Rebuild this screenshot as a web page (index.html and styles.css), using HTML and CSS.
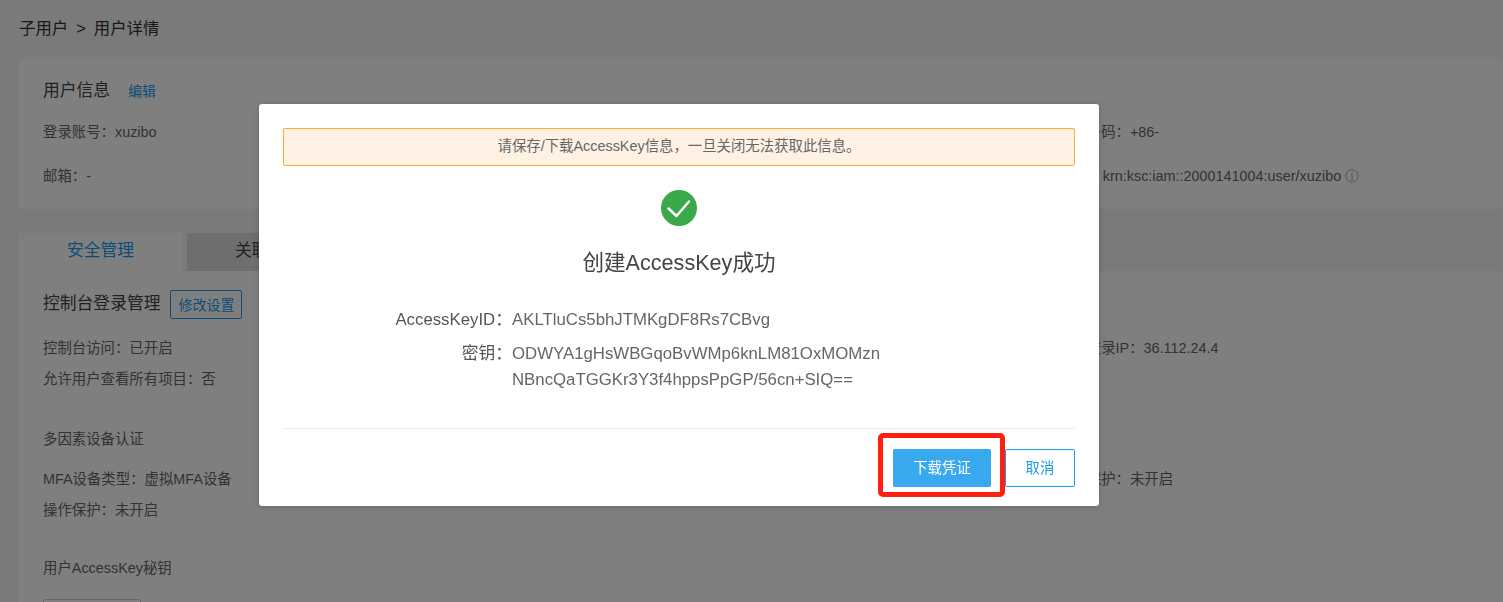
FILE: index.html
```html
<!DOCTYPE html>
<html lang="zh-CN">
<head>
<meta charset="utf-8">
<title>用户详情</title>
<link rel="stylesheet" href="styles.css">
</head>
<body>
<main class="page">
  <div class="crumb">子用户<span class="crumb-sep">&gt;</span>用户详情</div>

  <section class="card info-card">
    <div class="head"><h2 class="head-title">用户信息</h2><a class="link">编辑</a></div>
    <div class="grid info-grid">
      <div>登录账号：xuzibo</div><div>手机号码：+86-</div>
      <div>邮箱：-</div>
      <div class="arn">ARN：krn:ksc:iam::2000141004:user/xuzibo
        <svg class="info-icon" viewBox="0 0 14 14"><circle cx="7" cy="7" r="6.2"/><path d="M7 3.2v1.6M5.8 6h1.4v4.4M5.6 10.6h3"/></svg>
      </div>
    </div>
  </section>

  <nav class="tabs">
    <div class="tab active">安全管理</div>
    <div class="tab">关联项目</div>
  </nav>

  <section class="card panel">
    <div class="head panel-head"><h2 class="head-title">控制台登录管理</h2><button class="outline">修改设置</button></div>
    <div class="grid access-grid">
      <div>控制台访问：已开启</div><div>最近登录IP：36.112.24.4</div>
      <div>允许用户查看所有项目：否</div>
    </div>
    <h3 class="sub mfa-title">多因素设备认证</h3>
    <div class="grid mfa-grid">
      <div>MFA设备类型：虚拟MFA设备</div><div>登录保护：未开启</div>
      <div>操作保护：未开启</div>
    </div>
    <h3 class="sub key-title">用户AccessKey秘钥</h3>
    <button class="create" aria-label="新建"></button>
  </section>
</main>

<div class="overlay">
  <div class="modal">
    <div class="alert">请保存/下载AccessKey信息，一旦关闭无法获取此信息。</div>
    <svg class="ok" viewBox="0 0 36 36"><circle cx="18" cy="18" r="18"/><path d="M7.5 18.5l8 7.5L28 11.5"/></svg>
    <h2 class="modal-title">创建AccessKey成功</h2>
    <dl class="creds">
      <dt>AccessKeyID：</dt><dd>AKLTluCs5bhJTMKgDF8Rs7CBvg</dd>
      <dt>密钥：</dt><dd>ODWYA1gHsWBGqoBvWMp6knLM81OxMOMzn<br>NBncQaTGGKr3Y3f4hppsPpGP/56cn+SIQ==</dd>
    </dl>
    <div class="modal-foot">
      <button class="primary">下载凭证<span class="mark"></span></button>
      <button class="cancel">取消</button>
    </div>
  </div>
</div>
</body>
</html>
```
FILE: styles.css
```css
* { box-sizing: border-box; }
html, body { margin: 0; height: 100%; overflow: hidden; }
body {
  background: #f5f5f5;
  color: #666;
  font: 14.4px/20px "Liberation Sans", "Noto Sans CJK SC", sans-serif;
}
h2, h3, dl, dd { margin: 0; font-weight: 400; }
button { font: inherit; cursor: pointer; border-radius: 2px; }

.page { padding: 18px 0 0 19px; }
.crumb { color: #333; font-size: 16.4px; line-height: 20px; }
.crumb-sep { margin: 0 8px; }

.card { background: #fff; border-radius: 4px; padding-left: 24px; }
.info-card { margin-top: 21px; height: 150px; padding-top: 22px; }
.head { display: flex; align-items: center; }
.head-title { color: #444; font-size: 16.8px; line-height: 20px; }
.link { margin-left: 18px; color: #1a9bec; font-size: 13.9px; }

.grid { display: grid; grid-template-columns: 1015px 1fr; }
.info-grid { margin-top: 21px; row-gap: 24px; }
.arn { display: flex; align-items: center; gap: 4px; white-space: nowrap; }
.info-icon { width: 14px; height: 14px; fill: none; stroke: #aaa; stroke-width: 1; }

.tabs { display: flex; gap: 5px; margin-top: 24px; height: 38px; }
.tab { width: 163px; background: #ddd; color: #444; font-size: 16.8px; line-height: 36px; text-align: center; }
.tab.active { background: #fff; color: #1a9bec; }
.tab + .tab { width: 400px; text-align: left; padding-left: 48px; }

.panel { padding-top: 19px; height: 400px; border-radius: 0 4px 0 0; }
.panel-head { gap: 10px; height: 29px; }
.panel-head .head-title { margin-top: -2px; }
.outline { width: 72px; height: 29px; padding: 0; background: none; border: 1px solid #1a9bec; color: #1a9bec; font-size: 14px; }
.access-grid { margin-top: 19px; row-gap: 11px; }
.sub { color: #666; font-size: 14.4px; line-height: 20px; }
.mfa-title { margin-top: 40px; }
.mfa-grid { margin-top: 20px; row-gap: 11px; }
.key-title { margin-top: 38px; }
.create { display: block; width: 98px; height: 38px; margin-top: 21px; background: #fff; border: 1px solid #ccc; }

.overlay { position: fixed; inset: 0; background: rgba(0, 0, 0, .5); overflow: hidden; }
.modal {
  width: 840px; height: 402px; margin: 104px 0 0 259px; padding: 24px 24px 19px;
  background: #fff; border-radius: 3px; box-shadow: 0 1px 6px rgba(0, 0, 0, .2);
  display: flex; flex-direction: column; align-items: stretch;
}
.alert {
  height: 38px; background: #fff2e5; border: 1px solid #ffaa33; border-radius: 2px;
  color: #666; font-size: 14.4px; line-height: 34px; text-align: center;
}
.ok { align-self: center; width: 36px; height: 36px; margin-top: 24px; flex: none; }
.ok circle { fill: #3ba849; }
.ok path { fill: none; stroke: #fff; stroke-width: 2.4; stroke-linecap: round; stroke-linejoin: round; }
.modal-title { margin-top: 24px; color: #444; font-size: 21.6px; line-height: 26px; text-align: center; }
.creds {
  display: grid; grid-template-columns: 229px 1fr; margin-top: 33px; row-gap: 10px;
  color: #666; font-size: 16.8px; line-height: 22px;
}
.creds dt { text-align: right; color: #555; }
.creds dd { line-height: 26px; margin-top: -2px; }
.modal-foot {
  display: flex; justify-content: flex-end; gap: 14px; margin-top: auto;
  border-top: 1px solid #e8e8e8; padding-top: 20px;
}
.modal-foot button { height: 38px; padding: 0; font-size: 14.4px; }
.primary { position: relative; width: 98px; background: #39a9ef; border: 0; color: #fff; }
.cancel { width: 70px; background: #fff; border: 1px solid #1a9bec; color: #1a9bec; }
.mark {
  position: absolute; left: -15px; top: -16px; width: 127px; height: 64px;
  border: 5px solid #ff2010; border-radius: 5px; pointer-events: none;
}
```
